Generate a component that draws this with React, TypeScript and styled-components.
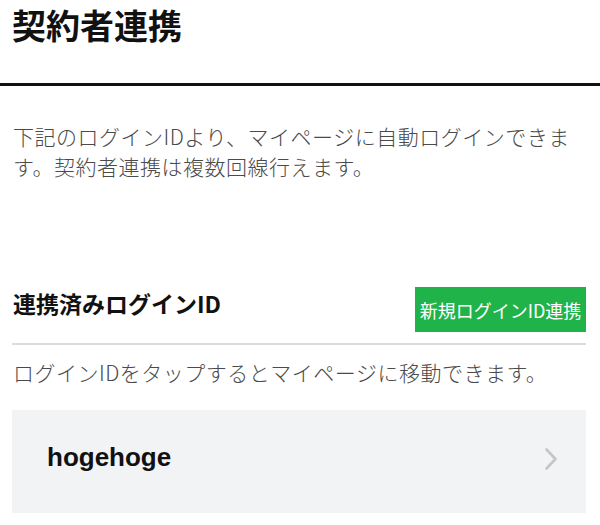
import React from "react";
import styled, { createGlobalStyle } from "styled-components";

const GlobalStyle = createGlobalStyle`
  html, body {
    margin: 0;
    padding: 0;
    background: #ffffff;
  }
  body {
    font-family: "Noto Sans CJK JP", "Noto Sans", sans-serif;
    color: #111;
  }
`;

const Page = styled.div`
  width: 600px;
  display: flex;
  flex-direction: column;
`;

const Header = styled.header`
  padding: 4px 14px 38px 12px;
  border-bottom: 3px solid #111;
`;

const Title = styled.h1`
  margin: 0;
  font-size: 34px;
  line-height: 41px;
  font-weight: 700;
  color: #111;
`;

const Content = styled.main`
  padding: 35px 14px 0 12px;
  display: flex;
  flex-direction: column;
`;

const Note = styled.p<{ $top?: number }>`
  margin: ${(p) => p.$top ?? 0}px 0 0 1px;
  font-size: 21px;
  font-weight: 300;
  letter-spacing: 0.5px;
  line-height: 30px;
  color: #4a4a4a;
`;

const SectionRow = styled.div`
  margin-top: 106px;
  display: flex;
  justify-content: space-between;
  align-items: flex-start;
  padding-bottom: 11px;
  border-bottom: 2px solid #dcdcdc;
`;

const SectionTitle = styled.h2`
  margin: 1px 0 0 1px;
  font-size: 23px;
  line-height: 30px;
  font-weight: 700;
  color: #111;
`;

const LinkButton = styled.button`
  height: 45px;
  width: 171px;
  padding: 0 4px;
  border: none;
  border-radius: 0;
  background: #1fb34a;
  color: #fff;
  font-family: "Noto Sans CJK JP", sans-serif;
  font-size: 18px;
  line-height: 1;
  display: flex;
  align-items: center;
  justify-content: center;
  white-space: nowrap;
  cursor: pointer;
`;

const IdCard = styled.a`
  margin-top: 23px;
  height: 103px;
  background: #f2f3f5;
  display: flex;
  align-items: center;
  justify-content: space-between;
  padding: 0 29px 0 35px;
  text-decoration: none;
`;

const IdText = styled.span`
  font-family: "Liberation Sans", Arial, sans-serif;
  font-weight: 700;
  font-size: 26px;
  color: #111;
  margin-top: -8px;
`;

const Chevron = styled.svg`
  width: 12px;
  height: 22px;
  margin-top: -6px;
`;

export default function App() {
  return (
    <Page>
      <GlobalStyle />
      <Header>
        <Title>契約者連携</Title>
      </Header>
      <Content>
        <Note>
          下記のログインIDより、マイページに自動ログインできます。契約者連携は複数回線行えます。
        </Note>
        <SectionRow>
          <SectionTitle>連携済みログインID</SectionTitle>
          <LinkButton>新規ログインID連携</LinkButton>
        </SectionRow>
        <Note $top={12}>ログインIDをタップするとマイページに移動できます。</Note>
        <IdCard href="#">
          <IdText>hogehoge</IdText>
          <Chevron viewBox="0 0 12 22">
            <polyline
              points="1.5,1.5 10.5,11 1.5,20.5"
              fill="none"
              stroke="#c6c6c6"
              strokeWidth="2.6"
              strokeLinecap="round"
              strokeLinejoin="round"
            />
          </Chevron>
        </IdCard>
      </Content>
    </Page>
  );
}
